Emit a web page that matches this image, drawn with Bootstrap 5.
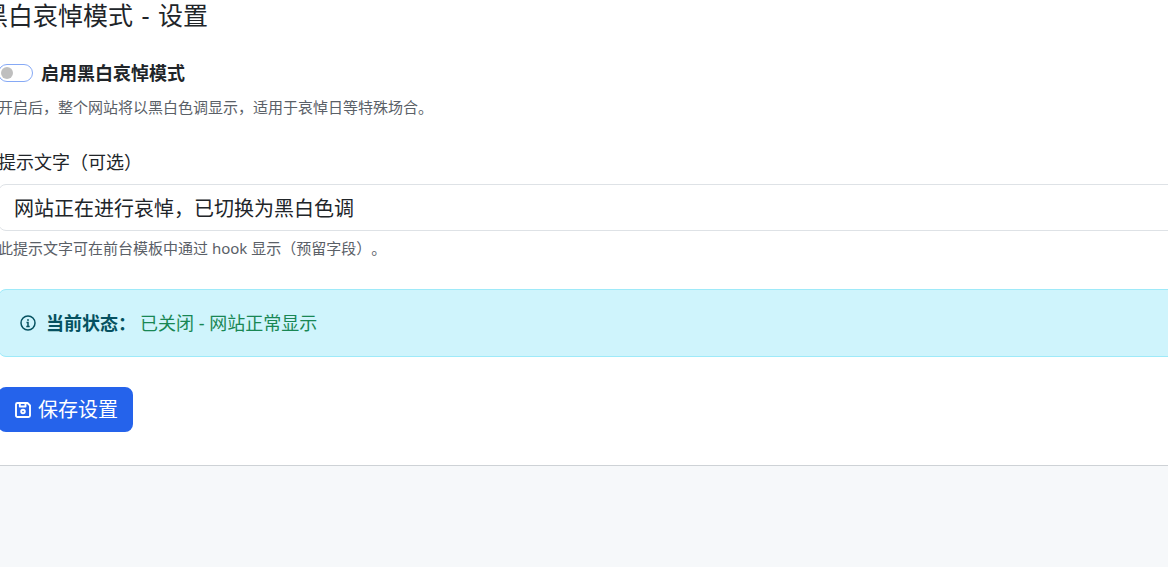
<!DOCTYPE html>
<html lang="zh-CN">
<head>
<meta charset="utf-8">
<meta name="viewport" content="width=device-width, initial-scale=1">
<title>黑白哀悼模式 - 设置</title>
<link href="https://cdn.jsdelivr.net/npm/bootstrap@5.3.0/dist/css/bootstrap.min.css" rel="stylesheet">
<style>
  body { background: #f6f8fa; color: #212529; font-family: "Noto Sans", "Noto Sans CJK SC", sans-serif; font-size: 18px; line-height: 24px; overflow-x: hidden; text-spacing-trim: space-all; }
  /* the panel bleeds over both window edges */
  .panel { margin: 0 -60px 0 -37px; border-bottom: 1px solid #ced2d6; background: #fff; }
  .panel-head { padding: 0 20px; }
  .panel-head h1 { font-size: 25px; line-height: 30px; font-weight: 400; }
  .panel-main { padding: 31px 35px 33px; }
  .hint { font-size: 15px; line-height: 24px; color: #5a6067; }
  .setting-switch { gap: 8px; }
  .setting-switch .form-check-input { width: 35px; height: 18px; border-color: #86a9f5; }
  .setting-switch + .hint { padding-top: 10px; }
  .setting-text { margin-top: 31px; }
  .setting-text .form-control { height: 47px; padding: 0 15px; font-size: 20px; color: #212529; border-color: #dee2e6; border-radius: 8px; margin: 10px 0 5px; }
  .status-box { margin: 29px 0 30px; padding: 21px; border-radius: 8px; background: #cff4fc; border-color: #9eeaf9; color: #055160; }
  .status-box svg { margin-right: 10px; }
  .status-box strong { margin-right: 4px; }
  .btn-save { height: 45px; padding: 0 15px 0 17px; gap: 7px; font-size: 20px; color: #fff; background: #2563eb; border: 0; border-radius: 8px; }
  .btn-save:hover { color: #fff; background: #1d4ed8; }
  .dash { margin: 0 2px; }
</style>
</head>
<body>
<main class="panel">
  <header class="panel-head"><h1 class="m-0">黑白哀悼模式 <span class="dash">-</span> 设置</h1></header>
  <form class="panel-main">
    <div class="form-check form-switch setting-switch d-flex align-items-center p-0 m-0">
      <input class="form-check-input float-none m-0" type="checkbox" role="switch" id="enabled" aria-describedby="enabledHint">
      <label class="form-check-label fw-bold" for="enabled">启用黑白哀悼模式</label>
    </div>
    <div class="hint" id="enabledHint">开启后，整个网站将以黑白色调显示，适用于哀悼日等特殊场合。</div>
    <div class="setting-text">
      <label class="d-block" for="notice">提示文字（可选）</label>
      <input class="form-control" type="text" id="notice" value="网站正在进行哀悼，已切换为黑白色调" aria-describedby="noticeHint">
      <div class="hint" id="noticeHint">此提示文字可在前台模板中通过 hook 显示（预留字段）。</div>
    </div>
    <div class="alert status-box d-flex align-items-center" role="status">
      <svg width="16" height="16" viewBox="0 0 16 16" fill="none" stroke="currentColor" stroke-width="1.5" aria-hidden="true"><circle cx="8" cy="8" r="7"/><path d="M6.500 7.500H8v3.700M6.300 11.400h3.400"/><circle cx="8" cy="5" r=".9" fill="currentColor" stroke="none"/></svg>
      <strong>当前状态：</strong>
      <span class="text-success">已关闭 - 网站正常显示</span>
    </div>
    <button type="submit" class="btn btn-save d-inline-flex align-items-center">
      <svg width="16" height="16" viewBox="0 0 16 16" fill="none" stroke="currentColor" stroke-width="1.9" stroke-linejoin="round" aria-hidden="true"><path d="M2.500 1h10L15 3.500v10a1.500 1.500 0 0 1-1.500 1.500h-11A1.500 1.500 0 0 1 1 13.500v-11A1.500 1.500 0 0 1 2.500 1z"/><path d="M4.800 1v3.500h5.700V1"/><circle cx="8" cy="9.500" r="1.800"/></svg>
      <span>保存设置</span>
    </button>
  </form>
</main>
<script src="https://cdn.jsdelivr.net/npm/bootstrap@5.3.0/dist/js/bootstrap.bundle.min.js"></script>
</body>
</html>
